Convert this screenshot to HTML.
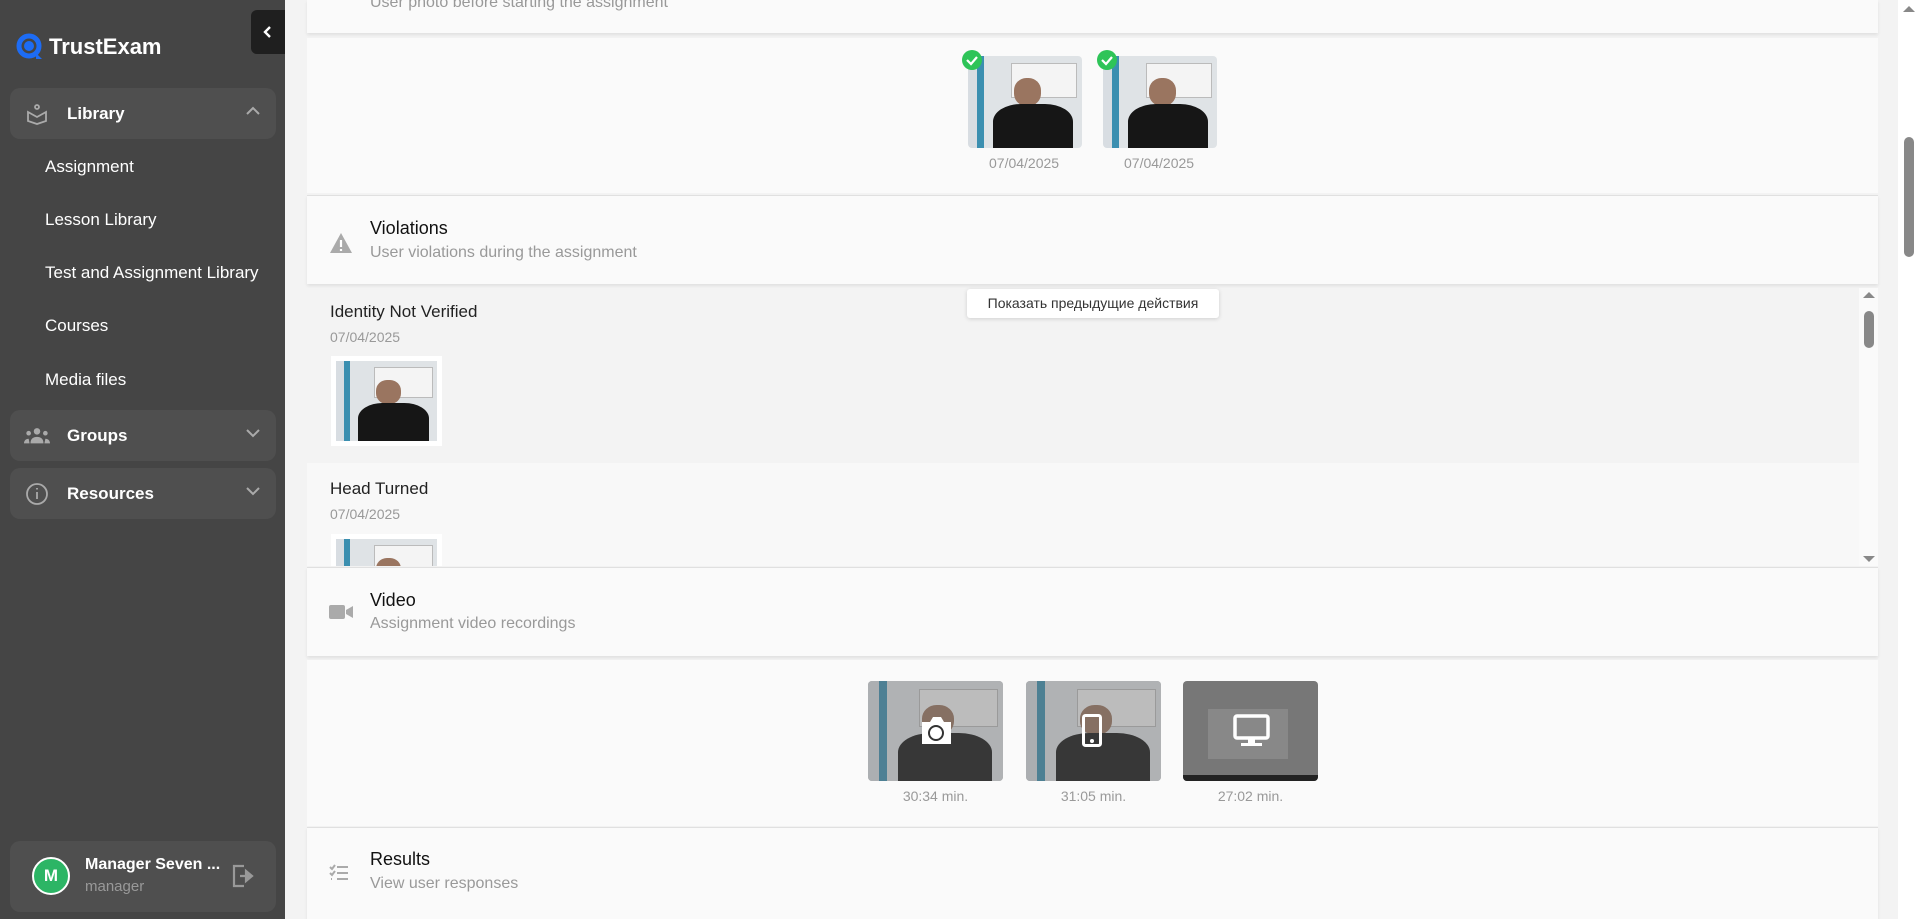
<!DOCTYPE html>
<html><head><meta charset="utf-8"><style>
*{box-sizing:border-box;margin:0;padding:0}
body{width:1920px;height:919px;overflow:hidden;background:#f3f3f3;font-family:"Liberation Sans","Noto Sans CJK SC",sans-serif;position:relative}
.sb{position:absolute;left:0;top:0;width:285px;height:919px;background:#454545;color:#fff}
.col{position:absolute;left:251px;top:10px;width:34px;height:44px;background:#1f1f1f;border-radius:6px 0 0 6px}
.logo{position:absolute;left:16px;top:33px;font-weight:bold;font-size:22px;display:flex;align-items:center;gap:6px}
.grp{position:absolute;left:10px;width:266px;height:51px;background:#4f4f4f;border-radius:10px;display:flex;align-items:center;font-size:17px;font-weight:bold}
.grp .ic{width:26px;margin-left:14px;margin-right:17px;display:flex;justify-content:center}
.grp .ch{position:absolute;right:16px;top:18px}
.sub{position:absolute;left:45px;font-size:17px}
.user{position:absolute;left:10px;top:841px;width:266px;height:71px;background:#4f4f4f;border-radius:10px}
.main{position:absolute;left:307px;width:1571px;background:#fafafa}
.hdr{position:absolute;left:307px;width:1571px;background:#fafafa;box-shadow:0 2px 3px rgba(0,0,0,.08)}
.hdr .t{position:absolute;left:63px;font-size:18px;color:#111}
.hdr .s{position:absolute;left:63px;font-size:16px;color:#999}
.hdr .i{position:absolute;left:22px}
.ph{position:absolute;border-radius:4px;overflow:hidden;background:linear-gradient(90deg,#d8dde2 0 8%,#3b8fb0 8% 14%,#dfe3e6 14% 100%)}
.ph i{position:absolute;left:38%;top:8%;width:58%;height:38%;background:#f4f4f4;border:1px solid #bbb}
.ph::before{content:"";position:absolute;left:40%;top:24%;width:24%;height:30%;border-radius:45%;background:#9a7560;z-index:1}
.ph::after{content:"";position:absolute;left:22%;top:52%;width:70%;height:55%;border-radius:35% 35% 0 0;background:#161616;z-index:1}
.dt{position:absolute;font-size:14px;color:#999}
.vd{position:absolute;top:681px;width:135px;height:100px;border-radius:4px;background:#6a6a6a;overflow:hidden}
.vl{position:absolute;top:788px;font-size:14px;color:#999;width:135px;text-align:center}
</style></head><body>
<div class="sb">
 <div class="col"><svg style="position:absolute;left:11px;top:15px" width="12" height="14" viewBox="0 0 12 14"><path d="M8 2L3 7l5 5" stroke="#fff" stroke-width="2.4" fill="none"/></svg></div>
 <div class="logo"><svg width="27" height="27" viewBox="0 0 27 27"><circle cx="13" cy="13" r="10" stroke="#1d6cf5" stroke-width="5" fill="none"/><circle cx="13" cy="13" r="5" fill="#1d6cf5"/><path d="M20 20l6 6h-6z" fill="#1d6cf5"/></svg>TrustExam</div>
 <div class="grp" style="top:88px"><span class="ic"><svg width="22" height="22" viewBox="0 0 22 22" fill="none" stroke="#aaa" stroke-width="1.8"><circle cx="11" cy="4" r="2"/><path d="M2 9l9 5 9-5v9l-9 3-9-3z"/></svg></span>Library<svg class="ch" width="14" height="10" viewBox="0 0 14 10"><path d="M1 8l6-6 6 6" stroke="#aaa" stroke-width="2" fill="none"/></svg></div>
 <div class="sub" style="top:157px">Assignment</div>
 <div class="sub" style="top:210px">Lesson Library</div>
 <div class="sub" style="top:263px">Test and Assignment Library</div>
 <div class="sub" style="top:316px">Courses</div>
 <div class="sub" style="top:370px">Media files</div>
 <div class="grp" style="top:410px"><span class="ic"><svg width="28" height="18" viewBox="0 0 28 18" fill="#aaa"><circle cx="14" cy="4" r="3.5"/><circle cx="5" cy="6" r="2.5"/><circle cx="23" cy="6" r="2.5"/><path d="M7 17c0-5 3-7 7-7s7 2 7 7zM0 17c0-3 2-5 5-5l1 5zM28 17c0-3-2-5-5-5l-1 5z"/></svg></span>Groups<svg class="ch" width="14" height="10" viewBox="0 0 14 10"><path d="M1 2l6 6 6-6" stroke="#aaa" stroke-width="2" fill="none"/></svg></div>
 <div class="grp" style="top:468px"><span class="ic"><svg width="24" height="24" viewBox="0 0 24 24" fill="none" stroke="#aaa" stroke-width="1.8"><circle cx="12" cy="12" r="10"/><path d="M12 10v7M12 6v1.5"/></svg></span>Resources<svg class="ch" width="14" height="10" viewBox="0 0 14 10"><path d="M1 2l6 6 6-6" stroke="#aaa" stroke-width="2" fill="none"/></svg></div>
 <div class="user">
  <div style="position:absolute;left:22px;top:16px;width:38px;height:38px;border-radius:50%;background:#2cb565;border:2px solid #fff;color:#fff;font-weight:bold;font-size:17px;text-align:center;line-height:34px">M</div>
  <div style="position:absolute;left:75px;top:15px;font-size:16px;font-weight:bold">Manager Seven ...</div>
  <div style="position:absolute;left:75px;top:37px;font-size:15px;color:#999">manager</div>
  <svg style="position:absolute;left:222px;top:23px" width="22" height="24" viewBox="0 0 22 24" fill="none" stroke="#999" stroke-width="2.2"><path d="M12 2H2v20h10M8 12h8"/><path d="M14 7l6 5-6 5z" fill="#999"/></svg>
 </div>
</div>

<div class="main" style="top:0;height:919px;background:#f3f3f3"></div>
<div class="hdr" style="top:0;height:33px"><div class="s" style="top:-6px">User photo before starting the assignment</div></div>
<div class="main" style="top:38px;height:155px"></div>
<div class="ph" style="left:968px;top:56px;width:114px;height:92px"><i></i></div>
<div class="ph" style="left:1103px;top:56px;width:114px;height:92px"><i></i></div>
<svg style="position:absolute;left:962px;top:50px" width="20" height="20"><circle cx="10" cy="10" r="10" fill="#2ec458"/><path d="M5 10l4 4 6-7" stroke="#fff" stroke-width="2.2" fill="none"/></svg>
<svg style="position:absolute;left:1097px;top:50px" width="20" height="20"><circle cx="10" cy="10" r="10" fill="#2ec458"/><path d="M5 10l4 4 6-7" stroke="#fff" stroke-width="2.2" fill="none"/></svg>
<div class="dt" style="left:989px;top:155px">07/04/2025</div>
<div class="dt" style="left:1124px;top:155px">07/04/2025</div>

<div class="hdr" style="top:195px;height:89px;border-top:1px solid #e0e0e0">
 <svg class="i" style="top:36px" width="24" height="22" viewBox="0 0 24 22"><path d="M12 1L23 21H1z" fill="#aaa"/><path d="M12 8v7M12 17v2" stroke="#fff" stroke-width="2.2"/></svg>
 <div class="t" style="top:22px">Violations</div><div class="s" style="top:48px">User violations during the assignment</div></div>

<div style="position:absolute;left:307px;top:288px;width:1552px;height:175px;background:#f3f3f3"></div>
<div style="position:absolute;left:307px;top:463px;width:1552px;height:103px;background:#f8f8f8;overflow:hidden">
 <div style="position:absolute;left:24px;top:71px;width:111px;height:40px;background:#fff;padding:5px"><div class="ph" style="position:relative;width:100%;height:80px;border-radius:0"><i></i></div></div>
</div>
<div style="position:absolute;left:1859px;top:288px;width:19px;height:278px;background:#fafafa"></div>
<svg style="position:absolute;left:1862px;top:291px" width="14" height="275"><path d="M1 7l6-6 6 6z" fill="#888"/><rect x="2" y="20" width="10" height="37" rx="5" fill="#888"/><path d="M1 265l6 6 6-6z" fill="#888"/></svg>
<div style="position:absolute;left:330px;top:302px;font-size:17px;color:#222">Identity Not Verified</div>
<div class="dt" style="left:330px;top:329px">07/04/2025</div>
<div style="position:absolute;left:331px;top:356px;width:111px;height:90px;background:#fff;padding:5px"><div class="ph" style="position:relative;width:100%;height:80px;border-radius:0"><i></i></div></div>
<div style="position:absolute;left:330px;top:479px;font-size:17px;color:#222">Head Turned</div>
<div class="dt" style="left:330px;top:506px">07/04/2025</div>
<div style="position:absolute;left:967px;top:289px;width:252px;height:29px;background:#fff;border-radius:3px;box-shadow:0 1px 4px rgba(0,0,0,.15);font-size:14px;color:#333;text-align:center;line-height:29px">Показать предыдущие действия</div>

<div class="hdr" style="top:567px;height:89px;border-top:1px solid #e0e0e0">
 <svg class="i" style="top:35px" width="24" height="18" viewBox="0 0 24 18" fill="#aaa"><rect x="0" y="2" width="16" height="14" rx="2"/><path d="M17 7l7-4v12l-7-4z"/></svg>
 <div class="t" style="top:22px">Video</div><div class="s" style="top:47px">Assignment video recordings</div></div>
<div class="main" style="top:660px;height:166px"></div>
<div class="vd" style="left:868px"><div class="ph" style="left:0;top:0;width:100%;height:100%;opacity:.6;border-radius:0"><i></i></div><svg style="position:absolute;left:52px;top:35px;z-index:2" width="33" height="29" viewBox="0 0 33 29"><path d="M2 6h8l3-5h8l3 5h7v22H2z" fill="#fff"/><circle cx="16" cy="17" r="7" fill="none" stroke="#333" stroke-width="2"/></svg></div>
<div class="vd" style="left:1026px"><div class="ph" style="left:0;top:0;width:100%;height:100%;opacity:.6;border-radius:0"><i></i></div><svg style="position:absolute;left:56px;top:33px;z-index:2" width="20" height="33" viewBox="0 0 20 33"><rect x="1.5" y="1.5" width="17" height="30" rx="2" fill="none" stroke="#fff" stroke-width="3"/><circle cx="10" cy="27" r="2" fill="#fff"/></svg></div>
<div class="vd" style="left:1183px;background:#777"><div style="position:absolute;left:25px;top:28px;width:80px;height:50px;background:#888"></div><div style="position:absolute;left:0;bottom:0;width:100%;height:6px;background:#222"></div><svg style="position:absolute;left:50px;top:33px" width="37" height="33" viewBox="0 0 37 33"><rect x="2" y="2" width="33" height="22" rx="2" fill="none" stroke="#fff" stroke-width="3.5"/><path d="M15 25h7v4h-7zM8 29h21v3H8z" fill="#fff"/></svg></div>
<div class="vl" style="left:868px">30:34 min.</div>
<div class="vl" style="left:1026px">31:05 min.</div>
<div class="vl" style="left:1183px">27:02 min.</div>

<div class="hdr" style="top:827px;height:92px;border-top:1px solid #e0e0e0">
 <svg class="i" style="top:36px" width="20" height="18" viewBox="0 0 20 18" fill="none" stroke="#aaa" stroke-width="2"><path d="M1 3l2 2 3-4M1 9l2 2 3-4M8 3h11M8 9h11M8 15h11M2 15h1"/></svg>
 <div class="t" style="top:21px">Results</div><div class="s" style="top:47px">View user responses</div></div>

<div style="position:absolute;left:1898px;top:0;width:22px;height:919px;background:#fff"></div>
<svg style="position:absolute;left:1902px;top:4px" width="14" height="260"><path d="M1 8l6-6 6 6z" fill="#888"/><rect x="2" y="133" width="10" height="120" rx="5" fill="#888"/></svg>
</body></html>
